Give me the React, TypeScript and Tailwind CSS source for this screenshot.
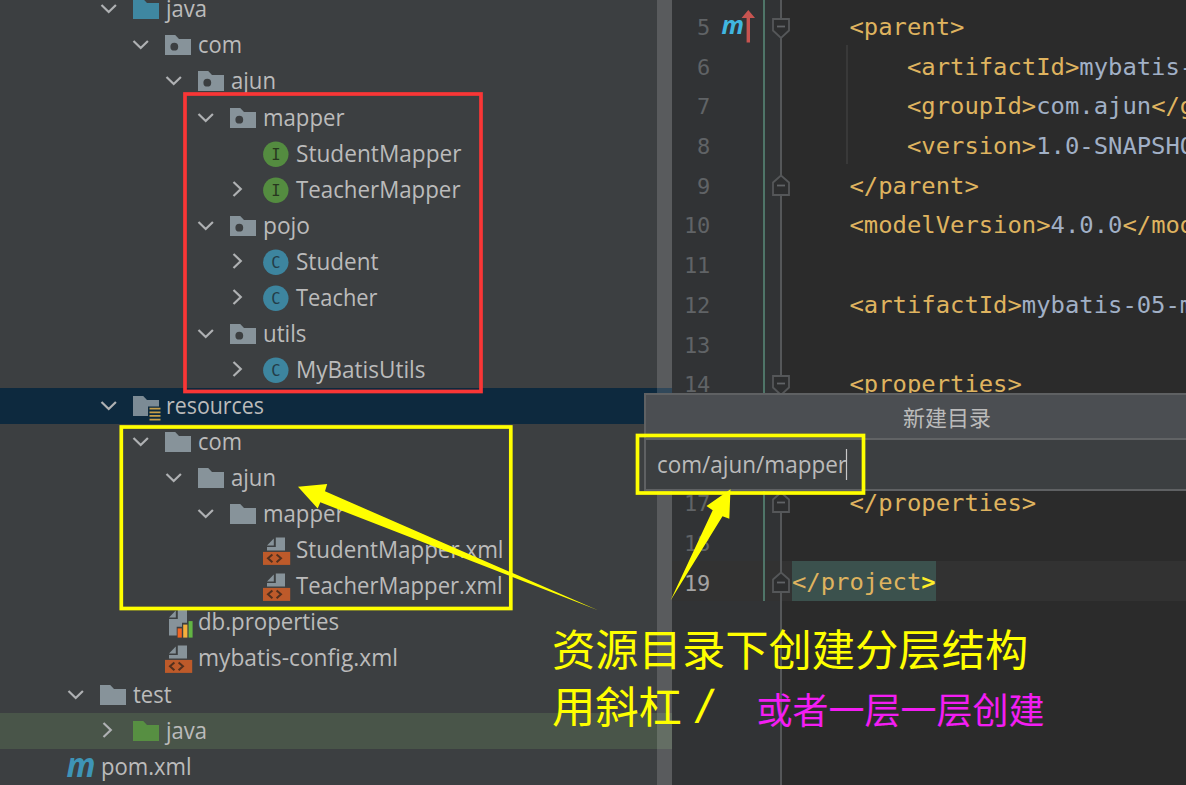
import React from 'react';

type IconKind =
    | 'source'
    | 'package'
    | 'folder'
    | 'resources'
    | 'test'
    | 'class'
    | 'interface'
    | 'xml'
    | 'properties'
    | 'maven';

interface TreeNode {
    name: string;
    level: number;
    icon: IconKind;
    state?: 'open' | 'closed';
    width: number;
}

// width = rendered label width, so labels keep the IDE font's metrics
const nodes: TreeNode[] = [
    { name: 'java', level: 2, icon: 'source', state: 'open', width: 41 },
    { name: 'com', level: 3, icon: 'package', state: 'open', width: 44 },
    { name: 'ajun', level: 4, icon: 'package', state: 'open', width: 45 },
    { name: 'mapper', level: 5, icon: 'package', state: 'open', width: 81.5 },
    { name: 'StudentMapper', level: 6, icon: 'interface', width: 165.5 },
    { name: 'TeacherMapper', level: 6, icon: 'interface', state: 'closed', width: 164.5 },
    { name: 'pojo', level: 5, icon: 'package', state: 'open', width: 47 },
    { name: 'Student', level: 6, icon: 'class', state: 'closed', width: 82.5 },
    { name: 'Teacher', level: 6, icon: 'class', state: 'closed', width: 81.5 },
    { name: 'utils', level: 5, icon: 'package', state: 'open', width: 43.5 },
    { name: 'MyBatisUtils', level: 6, icon: 'class', state: 'closed', width: 129.5 },
    { name: 'resources', level: 2, icon: 'resources', state: 'open', width: 98 },
    { name: 'com', level: 3, icon: 'folder', state: 'open', width: 44 },
    { name: 'ajun', level: 4, icon: 'folder', state: 'open', width: 45 },
    { name: 'mapper', level: 5, icon: 'folder', state: 'open', width: 81.5 },
    { name: 'StudentMapper.xml', level: 6, icon: 'xml', width: 207.5 },
    { name: 'TeacherMapper.xml', level: 6, icon: 'xml', width: 206.5 },
    { name: 'db.properties', level: 3, icon: 'properties', width: 141 },
    { name: 'mybatis-config.xml', level: 3, icon: 'xml', width: 200 },
    { name: 'test', level: 1, icon: 'folder', state: 'open', width: 38.5 },
    { name: 'java', level: 2, icon: 'test', state: 'closed', width: 41 },
    { name: 'pom.xml', level: 0, icon: 'maven', width: 90.5 },
];

const FolderShape: React.FC<{ color: string }> = ({ color }) => (
    <path d="M0 3H10.2L14 7H26V23H0Z" fill={color} />
);

const NodeIcon: React.FC<{ kind: IconKind }> = ({ kind }) => {
    const letter = kind === 'class' ? 'C' : 'I';
    return (
        <svg className="block h-[26px] w-[28px] shrink-0 overflow-visible" viewBox="0 0 28 26">
            {kind === 'source' && <FolderShape color="#3f87a1" />}
            {kind === 'test' && <FolderShape color="#578f42" />}
            {kind === 'folder' && <FolderShape color="#87939a" />}
            {kind === 'package' && (
                <>
                    <FolderShape color="#87939a" />
                    <circle cx="9.3" cy="14.7" r="3.9" fill="#3c3f41" />
                </>
            )}
            {kind === 'resources' && (
                <>
                    <path d="M0 3H10.2L14 7H26V13.5H15V23H0Z" fill="#7c8b95" />
                    <path d="M16.5 15.7H27.5M16.5 19.3H27.5M16.5 22.9H27.5M16.5 26.7H27.5" stroke="#c89f49" strokeWidth="1.8" />
                </>
            )}
            {(kind === 'class' || kind === 'interface') && (
                <>
                    <circle cx="12.8" cy="13.3" r="12.7" fill={kind === 'class' ? '#3d859f' : '#548c40'} />
                    <text
                        x="12.8"
                        y="18.8"
                        textAnchor="middle"
                        className="font-['DejaVu_Sans_Mono',monospace] text-[15.5px]"
                        fill={kind === 'class' ? '#233c47' : '#27371f'}
                    >
                        {letter}
                    </text>
                </>
            )}
            {kind === 'xml' && (
                <>
                    <path d="M12.8 0.6H22V13.6H4V10.1H12.8Z" fill="#87939a" />
                    <path d="M10.8 1.6V8.4H4Z" fill="#87939a" />
                    <rect x="0" y="14.9" width="27.2" height="13" fill="#bd5a2a" />
                    <path d="M9.4 17.4L5 21.3L9.4 25.2M13.6 17.4L18 21.3L13.6 25.2" stroke="#52301e" strokeWidth="2" fill="none" />
                </>
            )}
            {kind === 'properties' && (
                <>
                    <path d="M12.8 0.6H22V13.8H17V17.8H11.7V26.6H4V10.1H12.8Z" fill="#87939a" />
                    <path d="M10.8 1.6V8.4H4Z" fill="#87939a" />
                    <path d="M12.6 19.4h4.2v9.2h-4.2z" fill="#f26522" />
                    <path d="M18.2 15.6h4.2v13h-4.2z" fill="#f4af3d" />
                    <path d="M23.6 12.1h4v16.5h-4z" fill="#62b543" />
                </>
            )}
            {kind === 'maven' && (
                <text
                    x="-1.5"
                    y="23"
                    textLength="29"
                    lengthAdjust="spacingAndGlyphs"
                    className="font-['Open_Sans',sans-serif] text-[34px] font-bold italic"
                    fill="#3e94b6"
                >
                    m
                </text>
            )}
        </svg>
    );
};

const Chevron: React.FC<{ state?: 'open' | 'closed' }> = ({ state }) => (
    <svg className="mr-[7px] block h-[26px] w-[26px] shrink-0" viewBox="0 0 26 26">
        {state === 'open' && <path d="M1.5 9L8.7 16L15.9 9" stroke="#afb1b3" strokeWidth="2.2" fill="none" />}
        {state === 'closed' && <path d="M3.5 5L10.8 12L3.5 19" stroke="#afb1b3" strokeWidth="2.2" fill="none" />}
    </svg>
);

const ProjectTree: React.FC = () => (
    <div className="relative h-full w-[672px] shrink-0 overflow-hidden bg-[#3c3f41]">
        <div className="-mt-[8.7px] flex flex-col">
            {nodes.map((node, i) => (
                <div
                    key={i}
                    className={`flex h-[36.07px] shrink-0 items-center ${
                        node.icon === 'resources' ? 'bg-[#0d293e]' : node.icon === 'test' ? 'bg-[#495549]' : ''
                    }`}
                    style={{ paddingLeft: 34.5 + node.level * 32.5 }}
                >
                    <Chevron state={node.state} />
                    <NodeIcon kind={node.icon} />
                    <svg className="ml-[5px] block h-[36px] overflow-visible" width={node.width} viewBox={`0 0 ${node.width} 36`}>
                        <text
                            x="0"
                            y="26.2"
                            textLength={node.width}
                            lengthAdjust="spacingAndGlyphs"
                            className="font-['Open_Sans',sans-serif] text-[23.2px]"
                            fill="#bbbbbb"
                        >
                            {node.name}
                        </text>
                    </svg>
                </div>
            ))}
        </div>
        {/* scrollbar */}
        <div className="absolute top-0 right-0 h-full w-[15px] bg-white/15" />
    </div>
);

interface CodeLine {
    no: number;
    indent: number;
    parts: [string, 'tag' | 'text'][];
    fold?: 'start' | 'end';
    hidden?: boolean;
}

// hidden lines sit behind the popup
const lines: CodeLine[] = [
    { no: 5, indent: 1, parts: [['<parent>', 'tag']], fold: 'start' },
    { no: 6, indent: 2, parts: [['<artifactId>', 'tag'], ['mybatis-05-multi', 'text']] },
    { no: 7, indent: 2, parts: [['<groupId>', 'tag'], ['com.ajun', 'text'], ['</groupId>', 'tag']] },
    { no: 8, indent: 2, parts: [['<version>', 'tag'], ['1.0-SNAPSHOT', 'text'], ['</version>', 'tag']] },
    { no: 9, indent: 1, parts: [['</parent>', 'tag']], fold: 'end' },
    { no: 10, indent: 1, parts: [['<modelVersion>', 'tag'], ['4.0.0', 'text'], ['</modelVersion>', 'tag']] },
    { no: 11, indent: 0, parts: [] },
    { no: 12, indent: 1, parts: [['<artifactId>', 'tag'], ['mybatis-05-multi', 'text']] },
    { no: 13, indent: 0, parts: [] },
    { no: 14, indent: 1, parts: [['<properties>', 'tag']], fold: 'start' },
    { no: 15, indent: 0, parts: [], hidden: true },
    { no: 16, indent: 0, parts: [], hidden: true },
    { no: 17, indent: 1, parts: [['</properties>', 'tag']], fold: 'end' },
    { no: 18, indent: 0, parts: [] },
    { no: 19, indent: 0, parts: [['</project', 'tag']], fold: 'end' },
];

const FoldMarker: React.FC<{ kind: 'start' | 'end' }> = ({ kind }) => (
    <svg className="block h-[24px] w-[20px]" viewBox="0 0 20 24">
        <path
            d={kind === 'start' ? 'M2 4H18V15.5L10 23L2 15.5Z' : 'M2 21H18V8.5L10 1.5L2 8.5Z'}
            fill="#2d2e2f"
            stroke="#555759"
            strokeWidth="1.8"
        />
        <path d="M6 11.5H14" stroke="#606366" strokeWidth="1.8" />
    </svg>
);

const MavenParentIcon: React.FC = () => (
    <svg className="block h-[34px] w-[36px] overflow-visible" viewBox="0 0 36 34">
        <text
            x="-0.5"
            y="23.5"
            textLength="22.5"
            lengthAdjust="spacingAndGlyphs"
            className="font-['Open_Sans',sans-serif] text-[25px] font-bold italic"
            fill="#40b6e0"
        >
            m
        </text>
        <path d="M26.3 0L33 8H28V32.5H24.6V8H19.6Z" fill="#c75450" />
    </svg>
);

const Editor: React.FC = () => (
    <div className="relative flex h-full min-w-0 flex-1 overflow-hidden bg-[#2b2b2b] font-['DejaVu_Sans_Mono',monospace]">
        <div className="h-full w-[108px] shrink-0 bg-[#313335]" />
        <div className="h-full w-[2px] bg-[#555759]" />
        <div className="absolute top-0 left-[91px] h-[600.5px] w-[2px] bg-[#4f7568]" />
        <div className="absolute top-0 left-0 flex w-full flex-col pt-[5.2px]">
            {lines.map(line => (
                <div key={line.no} className={`flex h-[39.7px] shrink-0 items-center ${line.no === 19 ? 'bg-[#323232]' : ''}`}>
                    <div
                        className={`w-[38px] shrink-0 pt-[6px] text-right text-[22px] leading-none tracking-[-0.3px] ${
                            line.no === 19 ? 'text-[#a4a3a3]' : 'text-[#606366]'
                        }`}
                    >
                        {!line.hidden && line.no}
                    </div>
                    <div className="w-[36px] shrink-0 pt-[3px] pl-[12px]">{line.no === 5 && <MavenParentIcon />}</div>
                    <div className={`ml-[17px] h-full w-[3px] shrink-0 ${line.no === 19 ? 'border-l-2 border-[#4f7568]' : ''}`} />
                    <div className="relative flex h-full w-[26px] shrink-0 items-center pt-[4px] pl-[5px]">
                        {line.no === 19 && <div className="absolute top-0 left-[14px] h-full w-[2px] bg-[#555759]" />}
                        {line.fold && <div className="relative"><FoldMarker kind={line.fold} /></div>}
                    </div>
                    <div
                        className={`flex h-full items-center whitespace-pre pt-[5.5px] text-[23.87px] leading-none ${
                            line.no === 19 ? 'bg-[#3b514d]' : ''
                        }`}
                    >
                        <span>{'    '.repeat(line.indent)}</span>
                        {line.parts.map(([text, kind], i) => (
                            <span key={i} className={kind === 'tag' ? 'text-[#dfb35f]' : 'text-[#a1b0c6]'}>
                                {text}
                            </span>
                        ))}
                        {line.no === 19 && <span className="font-bold text-[#ffef28]">&gt;</span>}
                    </div>
                </div>
            ))}
        </div>
        {/* indent guide */}
        <div className="absolute top-[45px] left-[174px] h-[119px] w-[2px] bg-[#393939]" />
    </div>
);

const NewDirectoryPopup: React.FC = () => (
    <div className="absolute top-[393px] left-[644px] flex h-[98px] w-[606px] flex-col border-2 border-[#5f6163] bg-[#3c3f41] text-[#bbbbbb]">
        <div className="flex h-[45px] items-center justify-center border-b-2 border-[#616365] bg-[#4b4e52] pb-[2px] font-['Noto_Sans_CJK_SC',sans-serif] text-[22px] leading-none">
            新建目录
        </div>
        <div className="flex flex-1 items-center pl-[11px]">
            <svg className="block h-[34px] w-[190px] overflow-visible" viewBox="0 0 190 34">
                <text
                    x="0"
                    y="25.2"
                    textLength="190"
                    lengthAdjust="spacingAndGlyphs"
                    className="font-['Open_Sans',sans-serif] text-[23.2px]"
                    fill="#bbbbbb"
                >
                    com/ajun/mapper
                </text>
                <path d="M189.5 1V32" stroke="#c8c8c8" strokeWidth="1.2" />
            </svg>
        </div>
    </div>
);

const Annotations: React.FC = () => (
    <>
        <svg className="absolute top-0 left-0 h-[785px] w-[1186px]" viewBox="0 0 1186 785">
            <rect x="185" y="94" width="296" height="297.5" fill="none" stroke="#f93636" strokeWidth="3.7" />
            <g fill="none" stroke="#ffff00" strokeWidth="3.7">
                <rect x="121.3" y="427" width="389.5" height="181.5" />
                <rect x="637.5" y="435.5" width="226" height="57.5" />
            </g>
            <g fill="#ffff00">
                <path d="M298 486.7L327.2 484L325 491.3L598 610.3L320.3 502.3L317.7 508.5Z" />
                <path d="M730.5 489.3L706.5 506L712.7 510.3L670.5 600.5L722.5 516.3L729.3 518.7Z" />
            </g>
        </svg>
        <div className="absolute top-[618.5px] left-[552px] whitespace-pre font-['Noto_Sans_CJK_SC',sans-serif] text-[43.3px] leading-[57.5px] text-[#ffff00]">
            <div>资源目录下创建分层结构</div>
            <div className="flex">
                用斜杠
                <span className="ml-[14px] inline-block -skew-x-6 font-['Open_Sans',sans-serif] text-[48px]">/</span>
            </div>
        </div>
        <div className="absolute top-[683.5px] left-[756.5px] whitespace-pre font-['Noto_Sans_CJK_SC',sans-serif] text-[36px] leading-[48px] text-[#f31df3]">
            或者一层一层创建
        </div>
    </>
);

const App: React.FC = () => {
    return (
        <div className="relative flex h-[785px] w-[1186px] overflow-hidden bg-[#2b2b2b]">
            <ProjectTree />
            <Editor />
            <NewDirectoryPopup />
            <Annotations />
        </div>
    );
};

export default App;
